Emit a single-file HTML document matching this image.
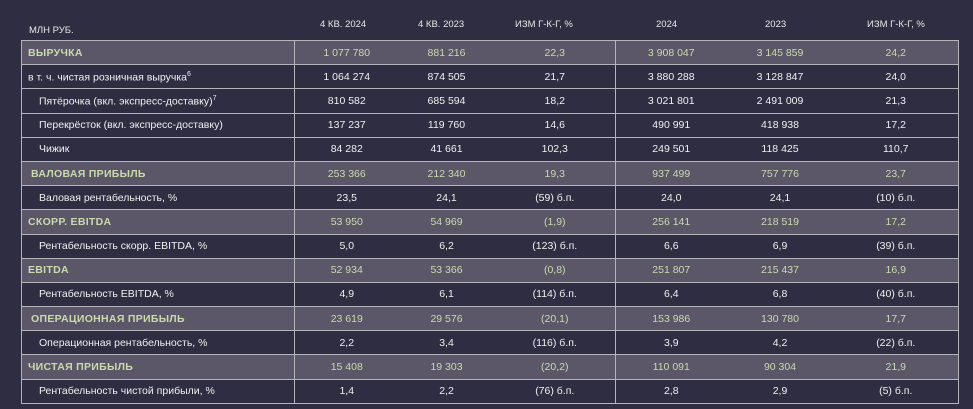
<!DOCTYPE html>
<html><head><meta charset="utf-8"><style>
body{margin:0;width:973px;height:409px;background:#2e2d42;font-family:"Liberation Sans","DejaVu Sans",sans-serif;color:#f0f0f0;overflow:hidden;position:relative}
.h{position:absolute;top:19px;font-size:9.5px;color:#e8e8e8}
table{position:absolute;left:21px;top:40px;width:937px;border-collapse:collapse;table-layout:fixed}
td{height:23.2px;border:1px solid #b4b4bc;border-left:none;border-right:none;font-size:10.5px;text-align:center;padding:0;white-space:nowrap}
td.l{text-align:left;border-right:1px solid #b4b4bc;padding-left:6px}
td.m{border-right:1px solid #b4b4bc}
tr.hl td{background:#5c5669;color:#c8dcaa;font-weight:bold;font-weight:normal}
tr.hl td.l{font-weight:bold;letter-spacing:.3px}
td.s{padding-left:17px}
table{border-left:1px solid #b4b4bc;border-right:1px solid #b4b4bc}
sup{font-size:7px}
</style></head><body>
<div class="h" style="left:29px;top:25px">МЛН РУБ.</div>
<div class="h" style="left:320px">4 КВ. 2024</div>
<div class="h" style="left:418px">4 КВ. 2023</div>
<div class="h" style="left:515px">ИЗМ Г-К-Г, %</div>
<div class="h" style="left:656px">2024</div>
<div class="h" style="left:765px">2023</div>
<div class="h" style="left:867px">ИЗМ Г-К-Г, %</div>
<table>
<colgroup><col style="width:273px"><col style="width:104px"><col style="width:96px"><col style="width:121px"><col style="width:111px"><col style="width:107px"><col style="width:125px"></colgroup>
<tr class="hl"><td class="l">ВЫРУЧКА</td><td>1 077 780</td><td>881 216</td><td class="m">22,3</td><td>3 908 047</td><td>3 145 859</td><td>24,2</td></tr>
<tr><td class="l">в т. ч. чистая розничная выручка<sup>6</sup></td><td>1 064 274</td><td>874 505</td><td class="m">21,7</td><td>3 880 288</td><td>3 128 847</td><td>24,0</td></tr>
<tr><td class="l s">Пятёрочка (вкл. экспресс-доставку)<sup>7</sup></td><td>810 582</td><td>685 594</td><td class="m">18,2</td><td>3 021 801</td><td>2 491 009</td><td>21,3</td></tr>
<tr><td class="l s">Перекрёсток (вкл. экспресс-доставку)</td><td>137 237</td><td>119 760</td><td class="m">14,6</td><td>490 991</td><td>418 938</td><td>17,2</td></tr>
<tr><td class="l s">Чижик</td><td>84 282</td><td>41 661</td><td class="m">102,3</td><td>249 501</td><td>118 425</td><td>110,7</td></tr>
<tr class="hl"><td class="l" style="padding-left:9px">ВАЛОВАЯ ПРИБЫЛЬ</td><td>253 366</td><td>212 340</td><td class="m">19,3</td><td>937 499</td><td>757 776</td><td>23,7</td></tr>
<tr><td class="l s">Валовая рентабельность, %</td><td>23,5</td><td>24,1</td><td class="m">(59) б.п.</td><td>24,0</td><td>24,1</td><td>(10) б.п.</td></tr>
<tr class="hl"><td class="l">СКОРР. EBITDA</td><td>53 950</td><td>54 969</td><td class="m">(1,9)</td><td>256 141</td><td>218 519</td><td>17,2</td></tr>
<tr><td class="l s">Рентабельность скорр. EBITDA, %</td><td>5,0</td><td>6,2</td><td class="m">(123) б.п.</td><td>6,6</td><td>6,9</td><td>(39) б.п.</td></tr>
<tr class="hl"><td class="l">EBITDA</td><td>52 934</td><td>53 366</td><td class="m">(0,8)</td><td>251 807</td><td>215 437</td><td>16,9</td></tr>
<tr><td class="l s">Рентабельность EBITDA, %</td><td>4,9</td><td>6,1</td><td class="m">(114) б.п.</td><td>6,4</td><td>6,8</td><td>(40) б.п.</td></tr>
<tr class="hl"><td class="l" style="padding-left:9px">ОПЕРАЦИОННАЯ ПРИБЫЛЬ</td><td>23 619</td><td>29 576</td><td class="m">(20,1)</td><td>153 986</td><td>130 780</td><td>17,7</td></tr>
<tr><td class="l s">Операционная рентабельность, %</td><td>2,2</td><td>3,4</td><td class="m">(116) б.п.</td><td>3,9</td><td>4,2</td><td>(22) б.п.</td></tr>
<tr class="hl"><td class="l">ЧИСТАЯ ПРИБЫЛЬ</td><td>15 408</td><td>19 303</td><td class="m">(20,2)</td><td>110 091</td><td>90 304</td><td>21,9</td></tr>
<tr><td class="l s">Рентабельность чистой прибыли, %</td><td>1,4</td><td>2,2</td><td class="m">(76) б.п.</td><td>2,8</td><td>2,9</td><td>(5) б.п.</td></tr>
</table>
</body></html>
